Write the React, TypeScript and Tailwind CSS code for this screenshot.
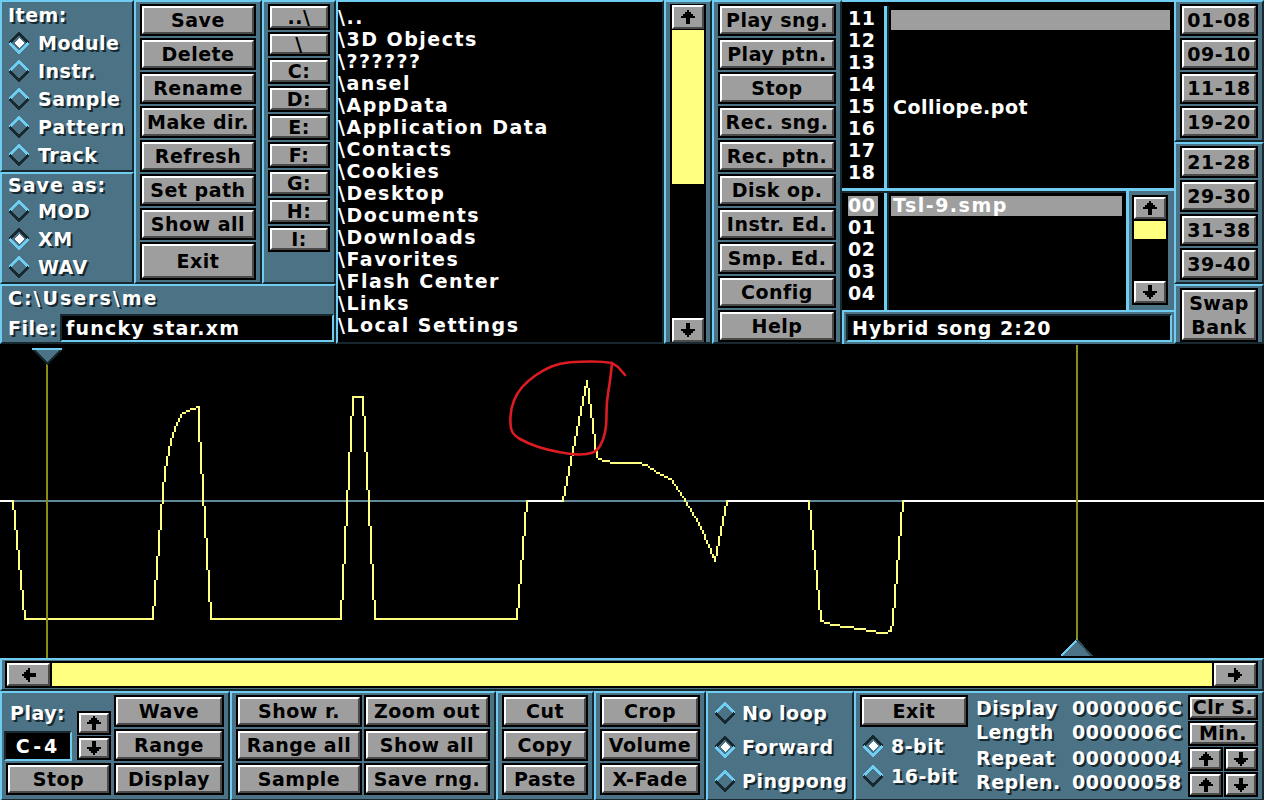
/**
 * Sample editor + disk op screen, old tracker style
 */

import React from 'react';

const panel =
  'bg-[#4b7285] border-2 border-t-[#6fcdf2] border-l-[#6fcdf2] border-b-[#17282f] border-r-[#17282f]';
const shadowText = 'text-white whitespace-nowrap leading-none [text-shadow:2px_2px_0_#17282f]';

const Bevel: React.FC<{ className?: string; children?: React.ReactNode }> = ({ className = '', children }) => (
  <div
    className={`flex items-center justify-center bg-[#9e9e9e] border-2 border-t-white border-l-white border-b-[#4a4a4a] border-r-[#4a4a4a] text-black leading-none whitespace-nowrap ${className}`}
  >
    {children}
  </div>
);

const Button: React.FC<{ className: string; children?: React.ReactNode }> = ({ className, children }) => (
  <div className={`bg-black p-[2px] shrink-0 ${className}`}>
    <Bevel className="w-full h-full">{children}</Bevel>
  </div>
);

const Arrow: React.FC<{ dir: 'up' | 'down' | 'left' | 'right' }> = ({ dir }) => {
  const rot = { up: '', down: 'rotate-180', left: '-rotate-90', right: 'rotate-90' }[dir];
  return (
    <svg width="14" height="14" viewBox="0 0 14 14" className={rot} shapeRendering="crispEdges">
      <path d="M6 0h2v2h2v2h2v2h2v2h-5v6h-4v-6h-5v-2h2v-2h2v-2h2z" fill="#000" />
    </svg>
  );
};

const Diamond: React.FC<{ on?: boolean }> = ({ on }) => {
  const upper = on ? '#17282f' : '#6fcdf2';
  const lower = on ? '#6fcdf2' : '#17282f';
  return (
    <svg width="22" height="22" viewBox="0 0 22 22" className="shrink-0" shapeRendering="crispEdges">
      <polyline points="1.5,11 11,1.5 20.5,11" fill="none" stroke={upper} strokeWidth="3" />
      <polyline points="1.5,11 11,20.5 20.5,11" fill="none" stroke={lower} strokeWidth="3" />
      {on && <polygon points="11,6 16,11 11,16 6,11" fill="#fff" />}
    </svg>
  );
};

const Radio: React.FC<{ label: string; on?: boolean; className: string }> = ({ label, on, className }) => (
  <div className={`flex items-center ${className}`}>
    <Diamond on={on} />
    <span className={shadowText}>{label}</span>
  </div>
);

const smoothPath = (pts: number[][]) => {
  let d = `M${pts[0][0]} ${pts[0][1]}`;
  for (let i = 1; i < pts.length - 1; i++) {
    const mx = (pts[i][0] + pts[i + 1][0]) / 2;
    const my = (pts[i][1] + pts[i + 1][1]) / 2;
    d += ` Q${pts[i][0]} ${pts[i][1]} ${mx} ${my}`;
  }
  const last = pts[pts.length - 1];
  return `${d} L${last[0]} ${last[1]}`;
};

// the screen is doubled, so the wave is walked on a 2px grid
const blockLine = (pts: number[][]) => {
  let d = '';
  for (let i = 0; i < pts.length - 1; i++) {
    const x0 = Math.floor(pts[i][0] / 2);
    const y0 = Math.floor(pts[i][1] / 2);
    const x1 = Math.floor(pts[i + 1][0] / 2);
    const y1 = Math.floor(pts[i + 1][1] / 2);
    const steps = Math.max(Math.abs(x1 - x0), Math.abs(y1 - y0), 1);
    for (let s = 0; s <= steps; s++) {
      const x = Math.round(x0 + ((x1 - x0) * s) / steps) * 2;
      const y = Math.round(y0 + ((y1 - y0) * s) / steps) * 2;
      d += `M${x} ${y}h2v2h-2z`;
    }
  }
  return d;
};

const wave1 = [
  [13, 501], [25, 619], [153, 619], [163, 490], [165, 470], [170, 440], [176, 422], [183, 413], [190, 409], [198, 407],
  [199, 424], [211, 619], [341, 619], [353, 397], [363, 397], [375, 619], [516, 619], [527, 501],
];
const wave2 = [
  [563, 501], [587, 381], [597, 457], [605, 461], [615, 463], [637, 463], [646, 465], [655, 470], [670, 478], [683, 497],
  [700, 527], [715, 561], [727, 501],
];
const wave3 = [
  [809, 501], [821, 621], [826, 623], [835, 625], [847, 627], [860, 629], [870, 631], [882, 633], [891, 630], [893, 618],
  [903, 501],
];

const ringPts = [
  [612, 363], [603, 361.5], [580, 361.5], [560, 363], [543, 370], [527, 381.5], [517, 393], [511, 408], [510, 425],
  [513, 435], [527, 443], [547, 450], [573, 454.5], [587, 454.5], [597, 451], [603.5, 440], [606.5, 425], [606.5, 402],
  [610, 382], [612, 363],
];

const Waveform: React.FC = () => (
  <svg width="1264" height="313" viewBox="0 345 1264 313" className="block shrink-0">
    <g shapeRendering="crispEdges">
      <rect x="0" y="500" width="1264" height="2" fill="#5f8a9c" />
      <rect x="0" y="500" width="14" height="2" fill="#fff" />
      <rect x="527" y="500" width="36" height="2" fill="#fff" />
      <rect x="727" y="500" width="82" height="2" fill="#fff" />
      <rect x="903" y="500" width="361" height="2" fill="#fff" />
      <path d={blockLine(wave1) + blockLine(wave2) + blockLine(wave3)} fill="#ffff80" />
      <rect x="46" y="362" width="2" height="296" fill="#8c8c14" />
      <rect x="1076" y="345" width="2" height="296" fill="#8c8c14" />
      <polygon points="32,350 62,350 47,365" fill="#17282f" />
      <polygon points="35,350 59,350 47,362" fill="#4b7285" />
      <rect x="32" y="348" width="30" height="2" fill="#6fcdf2" />
      <polygon points="1077,640 1092,656 1061,656" fill="#4b7285" />
      <polyline points="1061,656 1077,640" fill="none" stroke="#6fcdf2" strokeWidth="2" />
      <polyline points="1077,640 1092,656" fill="none" stroke="#2c4854" strokeWidth="2" />
    </g>
    <path d={smoothPath(ringPts)} fill="none" stroke="#dc1c22" strokeWidth="2.6" strokeLinecap="round" />
    <polyline points="612,363 618,367 625,375" fill="none" stroke="#dc1c22" strokeWidth="2.6" strokeLinecap="round" />
  </svg>
);

const diskButtons = ['Save', 'Delete', 'Rename', 'Make dir.', 'Refresh', 'Set path', 'Show all'];
const drives = [
  ['..\\', 'h-[26px]'],
  ['\\', 'h-[24px]'],
  ['C:', 'h-[26px]'],
  ['D:', 'h-[26px]'],
  ['E:', 'h-[26px]'],
  ['F:', 'h-[26px]'],
  ['G:', 'h-[26px]'],
  ['H:', 'h-[26px]'],
  ['I:', 'h-[26px]'],
];
const folders = [
  '\\..', '\\3D Objects', '\\??????', '\\ansel', '\\AppData', '\\Application Data', '\\Contacts', '\\Cookies',
  '\\Desktop', '\\Documents', '\\Downloads', '\\Favorites', '\\Flash Center', '\\Links', '\\Local Settings',
];
const mainButtons = [
  'Play sng.', 'Play ptn.', 'Stop', 'Rec. sng.', 'Rec. ptn.', 'Disk op.', 'Instr. Ed.', 'Smp. Ed.', 'Config', 'Help',
];
const instrNums = ['11', '12', '13', '14', '15', '16', '17', '18'];
const sampleNums = ['01', '02', '03', '04'];
const bank1 = ['01-08', '09-10', '11-18', '19-20'];
const bank2 = ['21-28', '29-30', '31-38', '39-40'];
const readouts = [
  ['Display', '0000006C', 'mt-[1px]'],
  ['Length', '0000006C', ''],
  ['Repeat', '00000004', 'mt-[2px]'],
  ['Replen.', '00000058', ''],
];

export default function App() {
  return (
    <div className="w-[1264px] h-[800px] overflow-hidden bg-black flex flex-col font-['DejaVu_Sans',sans-serif] font-bold text-[19px] tracking-[0.5px]">
      {/* top half: disk op + main buttons + instrument list */}
      <div className="flex h-[345px] shrink-0">
        <div className="w-[336px] flex flex-col shrink-0">
          <div className="flex h-[284px]">
            <div className="w-[134px] flex flex-col">
              <div className={`${panel} h-[172px] pl-[6px]`}>
                <div className={`${shadowText} h-[27px] flex items-center`}>Item:</div>
                <Radio label="Module" on className="h-[28px] gap-[8px]" />
                <Radio label="Instr." className="h-[28px] gap-[8px]" />
                <Radio label="Sample" className="h-[28px] gap-[8px]" />
                <Radio label="Pattern" className="h-[28px] gap-[8px] tracking-[1px]" />
                <Radio label="Track" className="h-[28px] gap-[8px]" />
              </div>
              <div className={`${panel} h-[112px] pl-[6px]`}>
                <div className={`${shadowText} h-[23px] flex items-center tracking-[1px]`}>Save as:</div>
                <Radio label="MOD" className="h-[28px] gap-[8px]" />
                <Radio label="XM" on className="h-[28px] gap-[8px]" />
                <Radio label="WAV" className="h-[28px] gap-[8px]" />
              </div>
            </div>
            <div className={`${panel} w-[128px] flex flex-col gap-[2px] pt-[2px] pl-[4px]`}>
              {diskButtons.map((b) => (
                <Button key={b} className="w-[116px] h-[32px]">{b}</Button>
              ))}
              <Button className="w-[116px] h-[38px]">Exit</Button>
            </div>
            <div className={`${panel} w-[74px] flex flex-col gap-[2px] pt-[2px] pl-[4px]`}>
              {drives.map(([d, h]) => (
                <Button key={d} className={`w-[62px] ${h}`}>{d}</Button>
              ))}
            </div>
          </div>
          <div className={`${panel} h-[60px]`}>
            <div className={`${shadowText} h-[28px] pb-[4px] pl-[6px] flex items-center tracking-[2px]`}>C:\Users\me</div>
            <div className="flex h-[28px]">
              <div className={`${shadowText} w-[58px] pl-[6px] flex items-center`}>File:</div>
              <div className="flex-1 bg-black border-2 border-t-[#17282f] border-l-[#17282f] border-b-[#6fcdf2] border-r-[#6fcdf2] text-white pl-[4px] flex items-center leading-none whitespace-nowrap tracking-[1.2px]">
                funcky star.xm
              </div>
            </div>
          </div>
        </div>

        <div className="w-[328px] h-[344px] shrink-0 bg-black border-2 border-t-[#6fcdf2] border-l-[#6fcdf2] border-b-[#17282f] border-r-[#17282f] pt-[4px] text-white tracking-[1.5px]">
          {folders.map((f) => (
            <div key={f} className="h-[22px] flex items-center leading-none whitespace-nowrap">{f}</div>
          ))}
        </div>

        <div className={`${panel} w-[48px] h-[344px] shrink-0 pl-[4px] pt-[2px]`}>
          <div className="w-[36px] h-[338px] bg-black pt-[1px] px-[2px] flex flex-col">
            <Bevel className="h-[24px]"><Arrow dir="up" /></Bevel>
            <div className="h-[154px] mt-[1px] bg-[#ffff80]" />
            <div className="flex-1" />
            <Bevel className="h-[24px]"><Arrow dir="down" /></Bevel>
          </div>
        </div>

        <div className={`${panel} w-[130px] h-[344px] shrink-0 flex flex-col gap-[2px] pt-[2px] pl-[4px]`}>
          {mainButtons.map((b) => (
            <Button key={b} className="w-[118px] h-[32px]">{b}</Button>
          ))}
        </div>

        <div className="w-[332px] h-[344px] shrink-0 flex flex-col text-white">
          <div className="h-[188px] border-t-2 border-t-[#6fcdf2] bg-black flex">
            <div className="w-[42px] pl-[6px] pt-[5px]">
              {instrNums.map((n) => (
                <div key={n} className="h-[22px] flex items-center leading-none">{n}</div>
              ))}
            </div>
            <div className="w-[5px] mt-[4px] border-l-[3px] border-l-[#6fcdf2] border-r-2 border-r-[#17282f]" />
            <div className="flex-1 pt-[8px]">
              <div className="ml-[2px] w-[279px] h-[20px] bg-[#9e9e9e]" />
              <div className="ml-[4px] mt-[66px] h-[22px] flex items-center leading-none">Colliope.pot</div>
            </div>
          </div>
          <div className="h-[122px] border-t-[3px] border-t-[#6fcdf2] bg-black flex">
            <div className="flex-1 flex border-t-2 border-t-[#17282f]">
              <div className="w-[42px] pl-[6px] pt-[3px]">
                <div className="w-[30px] h-[20px] mb-[2px] bg-[#9e9e9e] leading-[18px]">00</div>
                {sampleNums.map((n) => (
                  <div key={n} className="h-[20px] mb-[2px] leading-[18px]">{n}</div>
                ))}
              </div>
              <div className="w-[5px] border-l-[3px] border-l-[#6fcdf2] border-r-2 border-r-[#17282f]" />
              <div className="w-[237px] pt-[3px] pl-[2px]">
                <div className="w-[231px] h-[20px] bg-[#9e9e9e] pl-[2px] leading-[18px] tracking-[1.5px]">Tsl-9.smp</div>
              </div>
            </div>
            <div className="w-[48px] bg-[#4b7285] border-l-[3px] border-l-[#6fcdf2] pl-[3px] pt-[4px] pb-[2px]">
              <div className="w-[36px] h-[110px] bg-black p-[2px] flex flex-col">
                <Bevel className="h-[22px] shrink-0"><Arrow dir="up" /></Bevel>
                <div className="h-[18px] mt-[2px] bg-[#ffff80]" />
                <div className="flex-1" />
                <Bevel className="h-[22px] shrink-0"><Arrow dir="down" /></Bevel>
              </div>
            </div>
          </div>
          <div className="h-[34px] bg-[#4b7285] border-t-2 border-l-2 border-t-[#6fcdf2] border-l-[#6fcdf2] p-[2px]">
            <div className="w-[326px] h-[28px] bg-black border-2 border-t-[#17282f] border-l-[#17282f] border-b-[#6fcdf2] border-r-[#6fcdf2] pl-[4px] flex items-center leading-none whitespace-nowrap tracking-[1px]">
              Hybrid song 2:20
            </div>
          </div>
        </div>

        <div className="w-[90px] h-[344px] shrink-0 flex flex-col">
          <div className={`${panel} h-[142px] flex flex-col gap-[2px] pt-[2px] pl-[4px]`}>
            {bank1.map((b) => (
              <Button key={b} className="w-[78px] h-[32px]">{b}</Button>
            ))}
          </div>
          <div className={`${panel} h-[142px] flex flex-col gap-[2px] pt-[2px] pl-[4px]`}>
            {bank2.map((b) => (
              <Button key={b} className="w-[78px] h-[32px]">{b}</Button>
            ))}
          </div>
          <div className={`${panel} h-[60px] pt-[2px] pl-[4px]`}>
            <Button className="w-[78px] h-[54px]">
              <span className="text-center leading-[24px] whitespace-normal">Swap Bank</span>
            </Button>
          </div>
        </div>
      </div>

      <Waveform />

      {/* horizontal scrollbar */}
      <div className={`${panel} h-[33px] shrink-0 px-[3px] pt-[1px]`}>
        <div className="w-[1253px] h-[27px] bg-black flex gap-[2px] px-[2px] pt-[2px]">
          <Bevel className="w-[43px] h-[23px]"><Arrow dir="left" /></Bevel>
          <div className="w-[1160px] h-[23px] bg-[#ffff80]" />
          <Bevel className="w-[42px] h-[23px]"><Arrow dir="right" /></Bevel>
        </div>
      </div>

      {/* bottom controls */}
      <div className="flex h-[110px] shrink-0">
        <div className={`${panel} w-[230px] flex gap-[2px] pt-[2px] pl-[2px]`}>
          <div className="w-[108px] flex flex-col">
            <div className="flex h-[66px]">
              <div className="w-[68px]">
                <div className={`${shadowText} h-[36px] pl-[6px] flex items-center`}>Play:</div>
                <div className="h-[30px] bg-black border-2 border-t-[#17282f] border-l-[#17282f] border-b-[#6fcdf2] border-r-[#6fcdf2] text-white flex items-center justify-center leading-none tracking-[3px]">
                  C-4
                </div>
              </div>
              <div className="ml-[5px] mt-[16px] flex flex-col gap-[1px]">
                <Button className="w-[34px] h-[24px]"><Arrow dir="up" /></Button>
                <Button className="w-[34px] h-[24px]"><Arrow dir="down" /></Button>
              </div>
            </div>
            <Button className="ml-[2px] mt-[2px] w-[105px] h-[32px]">Stop</Button>
          </div>
          <div className="flex flex-col gap-[2px]">
            <Button className="w-[110px] h-[32px]">Wave</Button>
            <Button className="w-[110px] h-[32px]">Range</Button>
            <Button className="w-[110px] h-[32px]">Display</Button>
          </div>
        </div>

        <div className={`${panel} w-[266px] grid grid-cols-[126px_126px] auto-rows-[32px] gap-[2px] pt-[2px] pl-[4px]`}>
          {['Show r.', 'Zoom out', 'Range all', 'Show all', 'Sample', 'Save rng.'].map((b) => (
            <Button key={b} className="w-[126px] h-[32px]">{b}</Button>
          ))}
        </div>

        <div className={`${panel} w-[98px] flex flex-col gap-[2px] pt-[2px] pl-[4px]`}>
          {['Cut', 'Copy', 'Paste'].map((b) => (
            <Button key={b} className="w-[86px] h-[32px]">{b}</Button>
          ))}
        </div>

        <div className={`${panel} w-[112px] flex flex-col gap-[2px] pt-[2px] pl-[4px]`}>
          {['Crop', 'Volume', 'X-Fade'].map((b) => (
            <Button key={b} className="w-[100px] h-[32px]">{b}</Button>
          ))}
        </div>

        <div className={`${panel} w-[148px] pt-[3px] pl-[6px]`}>
          <Radio label="No loop" className="h-[34px] gap-[6px]" />
          <Radio label="Forward" on className="h-[34px] gap-[6px]" />
          <Radio label="Pingpong" className="h-[34px] gap-[6px]" />
        </div>

        <div className={`${panel} w-[410px] flex pt-[2px]`}>
          <div className="w-[116px] pl-[4px]">
            <Button className="w-[108px] h-[32px]">Exit</Button>
            <div className="mt-[4px] pl-[2px]">
              <Radio label="8-bit" on className="h-[30px] gap-[7px]" />
              <Radio label="16-bit" className="h-[30px] gap-[7px]" />
            </div>
          </div>
          <div className="w-[216px] pl-[4px]">
            {readouts.map(([label, value, mt]) => (
              <div key={label} className={`h-[24px] flex items-center ${mt}`}>
                <span className={`${shadowText} w-[96px]`}>{label}</span>
                <span className={shadowText}>{value}</span>
              </div>
            ))}
          </div>
          <div className="w-[70px] flex flex-col gap-[1px]">
            <Button className="w-[70px] h-[25px]">Clr S.</Button>
            <Button className="w-[70px] h-[25px]">Min.</Button>
            <div className="flex gap-[1px]">
              <Button className="w-[35px] h-[24px]"><Arrow dir="up" /></Button>
              <Button className="w-[34px] h-[24px]"><Arrow dir="down" /></Button>
            </div>
            <div className="flex gap-[1px]">
              <Button className="w-[35px] h-[25px]"><Arrow dir="up" /></Button>
              <Button className="w-[34px] h-[25px]"><Arrow dir="down" /></Button>
            </div>
          </div>
        </div>
      </div>
    </div>
  );
}
